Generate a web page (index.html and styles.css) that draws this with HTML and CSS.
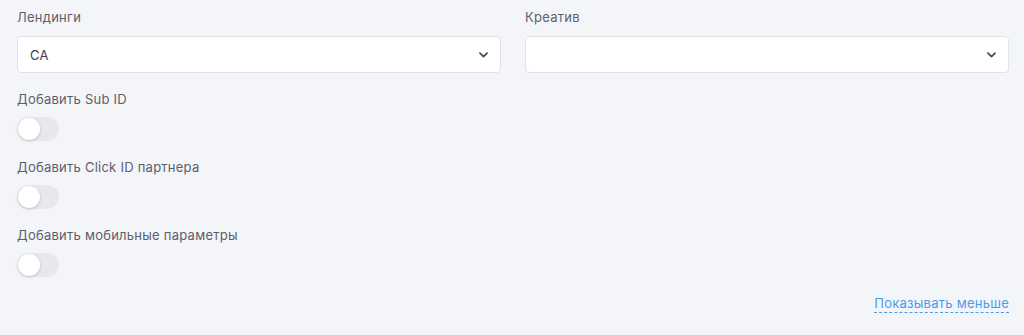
FILE: index.html
```html
<!DOCTYPE html>
<html lang="ru">
<head>
  <meta charset="UTF-8">
  <title>Ссылка</title>
  <link rel="stylesheet" href="styles.css">
</head>
<body>
  <div class="form">
    <div class="row">
      <div class="field">
        <label class="label">Лендинги</label>
        <div class="select">
          <span class="value">СА</span>
          <svg class="chevron" width="9" height="6" viewBox="0 0 9 6"><path d="M1 1.2 L4.5 4.6 L8 1.2" fill="none" stroke="#4b4f58" stroke-width="1.8" stroke-linecap="round" stroke-linejoin="round"/></svg>
        </div>
      </div>
      <div class="field">
        <label class="label">Креатив</label>
        <div class="select">
          <span class="value"></span>
          <svg class="chevron" width="9" height="6" viewBox="0 0 9 6"><path d="M1 1.2 L4.5 4.6 L8 1.2" fill="none" stroke="#4b4f58" stroke-width="1.8" stroke-linecap="round" stroke-linejoin="round"/></svg>
        </div>
      </div>
    </div>

    <div class="option">
      <div class="label">Добавить Sub ID</div>
      <div class="toggle"><span class="knob"></span></div>
    </div>
    <div class="option">
      <div class="label">Добавить Click ID партнера</div>
      <div class="toggle"><span class="knob"></span></div>
    </div>
    <div class="option">
      <div class="label">Добавить мобильные параметры</div>
      <div class="toggle"><span class="knob"></span></div>
    </div>

    <div class="more">
      <a class="more-link" href="#">Показывать меньше</a>
    </div>
  </div>
</body>
</html>
```

FILE: styles.css
```css
* { margin: 0; padding: 0; box-sizing: border-box; }
body {
  background-color: #f4f5f9;
  font-family: Inter, "Noto Sans", sans-serif;
  font-size: 13px;
  letter-spacing: 0.25px;
  color: #3c4049;
}
.form {
  padding: 8px 15px 0 17px;
}
.row {
  display: grid;
  grid-template-columns: 1fr 1fr;
  gap: 24px;
  margin-bottom: 1px;
}
.label {
  display: block;
  color: #5b5f69;
  font-size: 13px;
  line-height: 18px;
}
.field .label {
  margin-bottom: 10px;
}
.select {
  height: 37px;
  background: #fff;
  border: 1px solid #dfe2e8;
  border-radius: 4px;
  display: flex;
  align-items: center;
  justify-content: space-between;
  padding: 0 12px 0 12px;
}
.value {
  color: #3c4049;
}
.option {
  margin-top: 17px;
}
.option .label {
  margin-bottom: 9px;
}
.toggle {
  width: 42px;
  height: 24px;
  border-radius: 12px;
  background: #e6e8ec;
  position: relative;
}
.knob {
  position: absolute;
  left: 1px;
  top: 1px;
  width: 22px;
  height: 22px;
  border-radius: 50%;
  background: #fff;
  box-shadow: 0 1px 3px rgba(0,0,0,0.18);
}
.more {
  display: flex;
  justify-content: flex-end;
  margin-top: 17px;
}
.more-link {
  color: #4a9ce8;
  text-decoration: none;
  border-bottom: 1px dashed #4a9ce8;
  line-height: 18px;
}
```
